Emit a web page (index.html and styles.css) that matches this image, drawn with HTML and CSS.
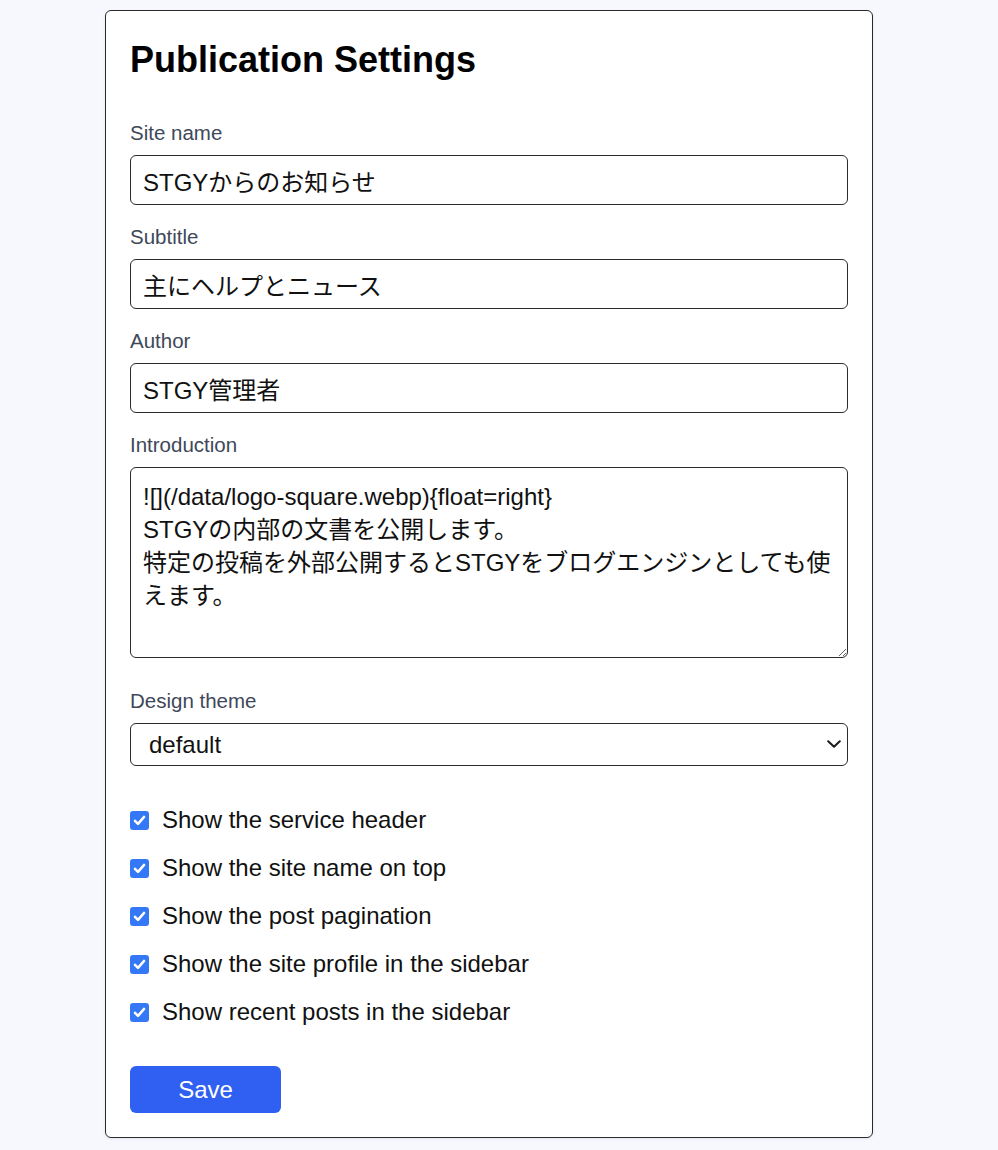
FILE: index.html
```html
<!DOCTYPE html>
<html lang="ja">
<head>
<meta charset="utf-8">
<title>Publication Settings</title>
<link rel="stylesheet" href="styles.css">
</head>
<body>
<div class="page">
  <form class="card">
    <h1 class="title">Publication Settings</h1>

    <div class="field">
      <label class="label" for="site-name">Site name</label>
      <input class="input" id="site-name" type="text" value="STGYからのお知らせ">
    </div>

    <div class="field">
      <label class="label" for="subtitle">Subtitle</label>
      <input class="input" id="subtitle" type="text" value="主にヘルプとニュース">
    </div>

    <div class="field">
      <label class="label" for="author">Author</label>
      <input class="input" id="author" type="text" value="STGY管理者">
    </div>

    <div class="field field-textarea">
      <label class="label" for="intro">Introduction</label>
      <textarea class="textarea" id="intro" rows="5">![](/data/logo-square.webp){float=right}
STGYの内部の文書を公開します。
特定の投稿を外部公開するとSTGYをブログエンジンとしても使えます。</textarea>
    </div>

    <div class="field">
      <label class="label" for="theme">Design theme</label>
      <div class="select-wrap">
        <select class="select" id="theme">
          <option>default</option>
        </select>
        <svg class="chevron" width="14" height="8" viewBox="0 0 14 8"><path d="M1.2 1.2L7 6.8L12.8 1.2" fill="none" stroke="#1a1a1a" stroke-width="2" stroke-linecap="round" stroke-linejoin="round"/></svg>
      </div>
    </div>

    <div class="checks">
      <label class="check"><span class="box"><svg width="19" height="19" viewBox="0 0 19 19"><path d="M5 9.8L8 12.8L14 6" fill="none" stroke="#fff" stroke-width="2.6" stroke-linecap="round" stroke-linejoin="round"/></svg></span>Show the service header</label>
      <label class="check"><span class="box"><svg width="19" height="19" viewBox="0 0 19 19"><path d="M5 9.8L8 12.8L14 6" fill="none" stroke="#fff" stroke-width="2.6" stroke-linecap="round" stroke-linejoin="round"/></svg></span>Show the site name on top</label>
      <label class="check"><span class="box"><svg width="19" height="19" viewBox="0 0 19 19"><path d="M5 9.8L8 12.8L14 6" fill="none" stroke="#fff" stroke-width="2.6" stroke-linecap="round" stroke-linejoin="round"/></svg></span>Show the post pagination</label>
      <label class="check"><span class="box"><svg width="19" height="19" viewBox="0 0 19 19"><path d="M5 9.8L8 12.8L14 6" fill="none" stroke="#fff" stroke-width="2.6" stroke-linecap="round" stroke-linejoin="round"/></svg></span>Show the site profile in the sidebar</label>
      <label class="check"><span class="box"><svg width="19" height="19" viewBox="0 0 19 19"><path d="M5 9.8L8 12.8L14 6" fill="none" stroke="#fff" stroke-width="2.6" stroke-linecap="round" stroke-linejoin="round"/></svg></span>Show recent posts in the sidebar</label>
    </div>

    <div class="actions">
      <button class="save" type="button">Save</button>
    </div>
  </form>
</div>
</body>
</html>
```

FILE: styles.css
```css
* {
  box-sizing: border-box;
}

html, body {
  margin: 0;
  padding: 0;
  background: #f6f8fd;
}

body {
  font-family: "Liberation Sans", "Noto Sans CJK JP", sans-serif;
  color: #111;
}

.page {
  padding: 10px 0 12px 105px;
}

.card {
  width: 768px;
  background: #fff;
  border: 1px solid #2b2b2b;
  border-radius: 6px;
  box-shadow: 0 1px 3px rgba(0, 0, 0, 0.08);
  padding: 24px 24px 24px;
  display: flex;
  flex-direction: column;
}

.title {
  margin: 3px 0 37px;
  font-size: 36px;
  line-height: 44px;
  font-weight: 700;
  color: #000;
}

.field {
  display: flex;
  flex-direction: column;
  margin-bottom: 18px;
}

.field-textarea {
  margin-bottom: 29px;
}

.label {
  font-size: 20.5px;
  line-height: 28px;
  color: #3e4859;
  margin-bottom: 8px;
}

.input,
.textarea,
.select {
  font-family: "Liberation Sans", "Noto Sans CJK JP", sans-serif;
  font-size: 24px;
  color: #111;
  background: #fff;
  border: 1px solid #2b2b2b;
  border-radius: 6px;
  width: 100%;
  margin: 0;
  outline: none;
}

.input {
  display: block;
  height: 50px;
  padding: 0 12px;
  line-height: 48px;
}

.textarea {
  display: block;
  padding: 12px;
  line-height: 33px;
  height: 191px;
  resize: vertical;
  overflow: hidden;
}

.select-wrap {
  position: relative;
}

.select {
  display: block;
  appearance: none;
  -webkit-appearance: none;
  height: 43px;
  padding: 0 40px 0 18px;
  line-height: 41px;
}

.chevron {
  position: absolute;
  right: 7px;
  top: 17px;
  pointer-events: none;
}

.checks {
  display: flex;
  flex-direction: column;
  gap: 16px;
  margin-top: 20px;
}

.check {
  display: flex;
  align-items: center;
  gap: 13px;
  font-size: 24px;
  line-height: 32px;
  color: #111;
}

.box {
  width: 19px;
  height: 19px;
  flex: 0 0 19px;
  border-radius: 3px;
  background: #3478f6;
  display: flex;
}

.actions {
  margin-top: 38px;
  display: flex;
}

.save {
  width: 151px;
  height: 47px;
  border: none;
  border-radius: 6px;
  background: #2f60f2;
  color: #fff;
  font-family: "Liberation Sans", sans-serif;
  font-size: 24px;
  cursor: pointer;
}
```
